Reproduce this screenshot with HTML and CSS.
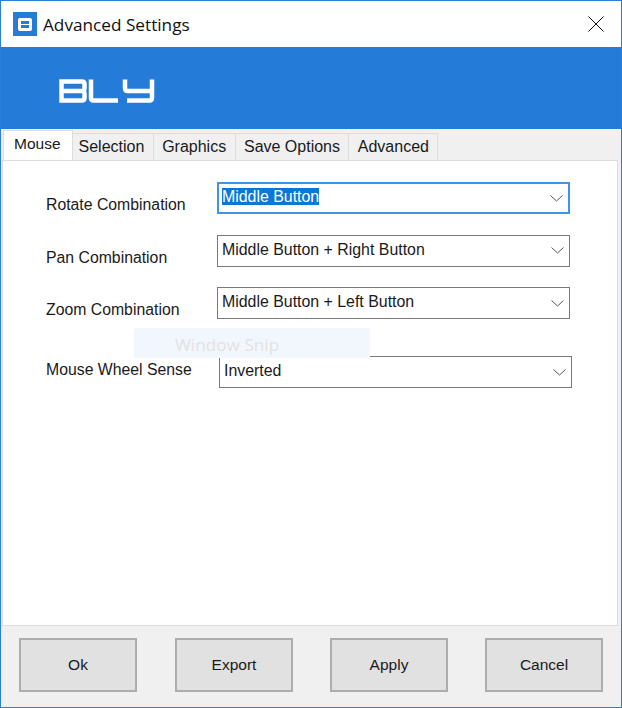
FILE: index.html
```html
<!DOCTYPE html>
<html lang="en">
<head>
    <meta charset="UTF-8">
    <meta name="viewport" content="width=device-width, initial-scale=1.0">
    <title>Advanced Settings</title>
    <link rel="stylesheet" href="styles.css">
</head>
<body>
    <div class="window">
        <header class="titlebar">
            <div class="appicon"><span class="appicon-mark"></span></div>
            <h1 class="title">Advanced Settings</h1>
            <svg class="closeicon" width="16" height="16" viewBox="0 0 16 16">
                <path d="M0.5 0.5 L15.5 15.5 M15.5 0.5 L0.5 15.5" stroke="#111" stroke-width="1" fill="none"/>
            </svg>
        </header>
        <div class="banner">
            <svg class="logo" width="96" height="24" viewBox="0 0 96 24" fill="none" stroke="#fff" stroke-width="4.5">
                <path d="M2.5 2.5 H23 Q25.5 2.5 25.5 5 V9 Q25.5 12 23 12 Q25.5 12 25.5 15 V19 Q25.5 21.5 23 21.5 H2.5 Z M2.5 12 H23"/>
                <path d="M32 0.5 V19 Q32 21.5 34.5 21.5 H59"/>
                <path d="M66 0.5 V9 Q66 12 68.5 12 H92 M93 0.5 V19 Q93 21.5 90.5 21.5 H68"/>
            </svg>
        </div>
        <nav class="tabs">
            <div class="tab active">Mouse</div>
            <div class="tab">Selection</div>
            <div class="tab">Graphics</div>
            <div class="tab">Save Options</div>
            <div class="tab">Advanced</div>
        </nav>
        <main class="panel">
            <div class="row">
                <label class="rowlabel">Rotate Combination</label>
                <div class="combo focused">
                    <span class="combotext"><span class="selected">Middle Button</span></span>
                    <svg class="chevron" width="13" height="7" viewBox="0 0 13 7"><path d="M0.5 0.5 L6.5 6 L12.5 0.5" stroke="#555" fill="none"/></svg>
                </div>
            </div>
            <div class="row">
                <label class="rowlabel">Pan Combination</label>
                <div class="combo">
                    <span class="combotext">Middle Button + Right Button</span>
                    <svg class="chevron" width="13" height="7" viewBox="0 0 13 7"><path d="M0.5 0.5 L6.5 6 L12.5 0.5" stroke="#555" fill="none"/></svg>
                </div>
            </div>
            <div class="row">
                <label class="rowlabel">Zoom Combination</label>
                <div class="combo">
                    <span class="combotext">Middle Button + Left Button</span>
                    <svg class="chevron" width="13" height="7" viewBox="0 0 13 7"><path d="M0.5 0.5 L6.5 6 L12.5 0.5" stroke="#555" fill="none"/></svg>
                </div>
            </div>
            <div class="row lastrow">
                <label class="rowlabel">Mouse Wheel Sense</label>
                <div class="combo">
                    <span class="combotext">Inverted</span>
                    <svg class="chevron" width="13" height="7" viewBox="0 0 13 7"><path d="M0.5 0.5 L6.5 6 L12.5 0.5" stroke="#555" fill="none"/></svg>
                </div>
            </div>
            <div class="snip">Window Snip</div>
        </main>
        <footer class="footer">
            <button class="btn">Ok</button>
            <button class="btn export">Export</button>
            <button class="btn">Apply</button>
            <button class="btn">Cancel</button>
        </footer>
    </div>
</body>
</html>
```

FILE: styles.css
```css
html,
body {
    margin: 0;
    height: 100%;
}

body {
    font-family: "Liberation Sans", Arial, sans-serif;
    font-size: 16px;
    color: #1a1a1a;
    background-color: #fff;
}

.window {
    display: flex;
    flex-direction: column;
    box-sizing: border-box;
    width: 622px;
    height: 708px;
    border: 1px solid #2a7fd8;
    background-color: #f0f0f0;
}

.titlebar {
    display: flex;
    align-items: center;
    height: 46px;
    padding-left: 12px;
    padding-right: 17px;
    background-color: #fff;
}

.appicon {
    display: flex;
    justify-content: center;
    align-items: center;
    width: 24px;
    height: 24px;
    background-color: #247cd6;
}

.appicon-mark {
    box-sizing: border-box;
    width: 14px;
    height: 13px;
    border: 3px solid #fff;
    border-radius: 2px;
    background: linear-gradient(#fff, #fff) center / 100% 1px no-repeat;
}

.title {
    flex: 1;
    margin: 0 0 0 6px;
    font-family: "Open Sans", sans-serif;
    font-size: 17.2px;
    font-weight: normal;
    color: #111;
}

.banner {
    display: flex;
    align-items: center;
    box-sizing: border-box;
    height: 82px;
    padding-left: 58px;
    padding-top: 5px;
    background-color: #247cd8;
}

.logo {
    filter: blur(0.4px);
}

.tabs {
    display: flex;
    align-items: flex-end;
    height: 31px;
    padding-left: 2px;
}

.tab {
    box-sizing: border-box;
    height: 27px;
    margin-left: -1px;
    padding: 0 8.4px;
    line-height: 26px;
    border: 1px solid #dcdcdc;
    border-bottom: none;
    background-color: #f0f0f0;
    white-space: nowrap;
}

.tab.active {
    position: relative;
    height: 31px;
    margin-left: 0;
    margin-bottom: -1px;
    padding: 0 11px 0 10px;
    font-size: 15.5px;
    line-height: 26px;
    background-color: #fff;
}

.tab.active + .tab {
    padding-left: 6px;
}

.panel {
    position: relative;
    flex: 1;
    margin: 0 3px 0 1px;
    padding: 21px 0 0 43px;
    background-color: #fff;
    border: 1px solid #dcdcdc;
}

.row {
    display: flex;
    align-items: flex-start;
    margin-bottom: 20.5px;
}

.rowlabel {
    width: 171px;
    padding-top: 14px;
    font-size: 15.8px;
    white-space: nowrap;
}

.combo {
    display: flex;
    align-items: center;
    justify-content: space-between;
    box-sizing: border-box;
    width: 353px;
    height: 32px;
    padding: 0 5px 0 4px;
    border: 1px solid #7a7a7a;
    font-size: 15.9px;
    background-color: #fff;
}

.combotext {
    margin-bottom: 2px;
}

.combo.focused {
    border: 2px solid #3f94e4;
    padding-left: 3px;
}

.selected {
    background-color: #0a78d7;
    color: #fff;
}

.lastrow {
    margin-top: 37px;
}

.lastrow .rowlabel {
    width: 173px;
    padding-top: 5px;
}

.snip {
    position: absolute;
    left: 131px;
    top: 167px;
    box-sizing: border-box;
    width: 236px;
    height: 30px;
    padding-left: 41px;
    line-height: 33px;
    font-family: "Open Sans", sans-serif;
    font-size: 17.2px;
    color: #e2e2e2;
    background-color: #f2f7fd;
}

.footer {
    display: flex;
    gap: 37px;
    height: 81px;
    box-sizing: border-box;
    padding: 12px 0 0 18px;
}

.btn {
    width: 118px;
    height: 54px;
    font-family: inherit;
    font-size: 15.5px;
    color: #1a1a1a;
    background-color: #e1e1e1;
    border: 2px solid #adadad;
}

.btn.export {
    margin-left: 1px;
}
```
